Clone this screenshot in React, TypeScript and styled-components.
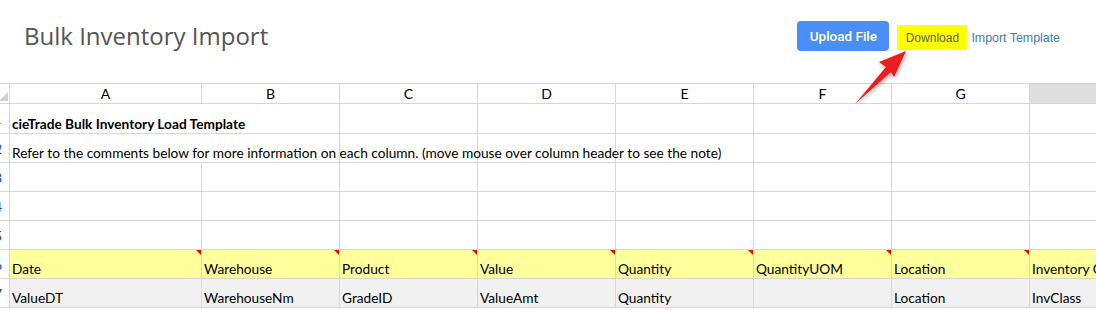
import React from "react";
import styled, { createGlobalStyle, css } from "styled-components";

const GlobalStyle = createGlobalStyle`
	body {
		margin: 0;
		background: #ffffff;
	}
`;

const grid = {
	line: "#d6d6d6",
	yellow: "#ffff9c",
	gray: "#f1f1f1",
	headerSelected: "#dedede",
};

const Page = styled.div`
	width: 1096px;
	height: 310px;
	overflow: hidden;
	font-family: "Liberation Sans", Arial, sans-serif;
`;

const Header = styled.header`
	height: 72px;
	display: flex;
	align-items: center;
	justify-content: space-between;
	padding: 0 36px 0 24px;
	margin-bottom: 11px;
	position: relative;
`;

const Title = styled.h1`
	margin: 0;
	font-family: "Open Sans", sans-serif;
	font-size: 24px;
	font-weight: 400;
	color: #555555;
	padding-bottom: 1px;
`;

const Actions = styled.div`
	display: flex;
	align-items: center;
`;

const UploadButton = styled.button`
	width: 92px;
	height: 30px;
	border: none;
	border-radius: 4px;
	background: #4a8ff7;
	color: #ffffff;
	font-family: Roboto, "Liberation Sans", sans-serif;
	font-size: 13.5px;
	font-weight: 500;
	cursor: pointer;
	margin-right: 8px;
`;

const DownloadLink = styled.a`
	display: flex;
	align-items: center;
	justify-content: center;
	width: 70px;
	height: 25px;
	margin-top: 3px;
	background: #ffff00;
	color: #5f5f3a;
	font-size: 12px;
	text-decoration: none;
	margin-right: 4px;
`;

const TemplateLink = styled.a`
	color: #3f78d8;
	font-size: 12.4px;
	text-decoration: none;
	margin-top: 3px;
`;

const Sheet = styled.div`
	display: grid;
	grid-template-columns: 10px 192px repeat(6, 138px) 200px;
	grid-template-rows: 20px 30px repeat(6, 29px);
	border-top: 1px solid ${grid.line};
	font-family: Lato, "Open Sans", sans-serif;
	font-size: 13.7px;
	color: #000000;
`;

type Fill = "none" | "yellow" | "gray";

const Cell = styled.div<{ $fill?: Fill; $bold?: boolean; $spill?: boolean }>`
	position: relative;
	display: flex;
	align-items: flex-end;
	padding: 0 2px 1px;
	border-right: 1px solid ${grid.line};
	border-bottom: 1px solid ${grid.line};
	white-space: nowrap;
	font-weight: ${(p) => (p.$bold ? 700 : 400)};
	background: ${(p) =>
		p.$fill === "yellow" ? grid.yellow : p.$fill === "gray" ? grid.gray : "transparent"};
	${(p) =>
		p.$spill &&
		css`
			z-index: 1;
			border-right-color: transparent;
		`}
`;

const ColHeader = styled.div<{ $selected?: boolean }>`
	display: flex;
	align-items: center;
	justify-content: center;
	border-right: 1px solid ${grid.line};
	border-bottom: 1px solid ${grid.line};
	background: ${(p) => (p.$selected ? grid.headerSelected : "#ffffff")};
	color: ${(p) => (p.$selected ? "#c98a2b" : "#000000")};
	font-size: 14px;
`;

const Corner = styled.div`
	position: relative;
	border-right: 1px solid ${grid.line};
	border-bottom: 1px solid ${grid.line};

	&::after {
		content: "";
		position: absolute;
		right: 1px;
		bottom: 2px;
		border-style: solid;
		border-width: 0 0 9px 9px;
		border-color: transparent transparent #cfcfcf transparent;
	}
`;

const RowHeader = styled.div<{ $active?: boolean }>`
	display: flex;
	align-items: center;
	justify-content: flex-end;
	padding-right: 7px;
	overflow: hidden;
	border-right: 1px solid ${grid.line};
	border-bottom: 1px solid ${grid.line};
	color: ${(p) => (p.$active ? "#1fc6f2" : "#20489a")};
	font-size: 14px;
`;

const CommentMark = styled.span`
	position: absolute;
	top: 0;
	right: 0;
	border-style: solid;
	border-width: 0 5px 5px 0;
	border-color: transparent #ff0000 transparent transparent;
`;

const Arrow = styled.svg`
	position: absolute;
	left: 840px;
	top: 40px;
	overflow: visible;
	filter: drop-shadow(1px 2px 2px rgba(0, 0, 0, 0.35));
`;

const columns = ["A", "B", "C", "D", "E", "F", "G", "H"];

const labels = [
	"Date",
	"Warehouse",
	"Product",
	"Value",
	"Quantity",
	"QuantityUOM",
	"Location",
	"Inventory Class",
];

const fields = ["ValueDT", "WarehouseNm", "GradeID", "ValueAmt", "Quantity", "", "Location", "InvClass"];

function EmptyRow({ n }: { n: number }) {
	return (
		<>
			<RowHeader>{n}</RowHeader>
			{columns.map((c) => (
				<Cell key={c} />
			))}
		</>
	);
}

export default function App() {
	return (
		<Page>
			<GlobalStyle />
			<Header>
				<Title>Bulk Inventory Import</Title>
				<Actions>
					<UploadButton>Upload File</UploadButton>
					<DownloadLink href="#">Download</DownloadLink>
					<TemplateLink href="#">Import Template</TemplateLink>
				</Actions>
				<Arrow width="70" height="70" viewBox="0 0 70 70">
					<polygon
						points="66,11 39,22 46,27 15,64 51,32 54,37"
						fill="#ee1c1c"
					/>
				</Arrow>
			</Header>
			<Sheet>
				<Corner />
				{columns.map((c) => (
					<ColHeader key={c} $selected={c === "H"}>
						{c}
					</ColHeader>
				))}

				<RowHeader $active>1</RowHeader>
				<Cell $bold $spill>
					cieTrade Bulk Inventory Load Template
				</Cell>
				{columns.slice(1).map((c) => (
					<Cell key={c} />
				))}

				<RowHeader>2</RowHeader>
				<Cell $spill>
					Refer to the comments below for more information on each column. (move mouse over
					column header to see the note)
				</Cell>
				{columns.slice(1).map((c) => (
					<Cell key={c} />
				))}

				<EmptyRow n={3} />
				<EmptyRow n={4} />
				<EmptyRow n={5} />

				<RowHeader>6</RowHeader>
				{labels.map((l, i) => (
					<Cell key={l} $fill="yellow">
						{l}
						{i < 7 && <CommentMark />}
					</Cell>
				))}

				<RowHeader>7</RowHeader>
				{fields.map((f, i) => (
					<Cell key={i} $fill="gray">
						{f}
					</Cell>
				))}
			</Sheet>
		</Page>
	);
}
